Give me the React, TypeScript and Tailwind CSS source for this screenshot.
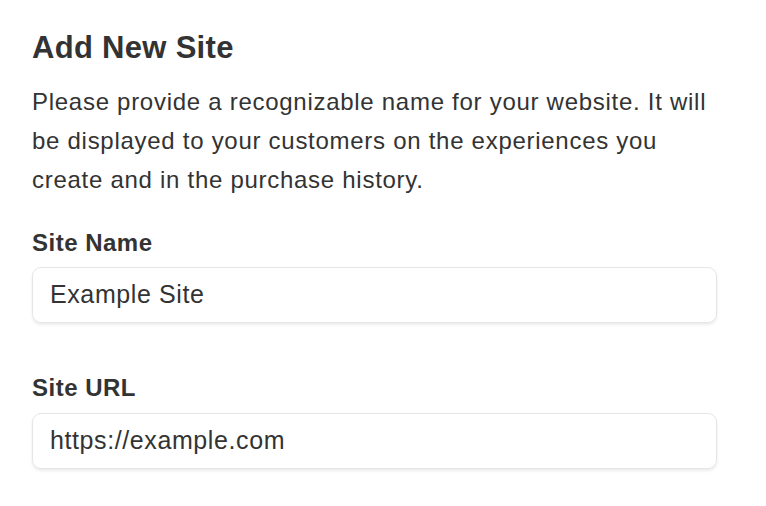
export default function App() {
  return (
    <div
      className="w-[766px] h-[506px] bg-white text-[#333333] px-8 pt-[28px]"
      style={{ fontFamily: '"Liberation Sans", Arial, sans-serif' }}
    >
      <div className="w-[685px]">
        <h1 className="text-[31px] font-bold leading-[40px] tracking-[0.3px]">Add New Site</h1>
        <p className="mt-[14px] text-[24px] leading-[39px] tracking-[0.72px]">
          Please provide a recognizable name for your website. It will be displayed to your customers on the experiences you create and in the purchase history.
        </p>
        <div className="mt-[29px]">
          <label className="block text-[24px] font-bold leading-[30px] tracking-[0.5px]">Site Name</label>
          <div className="mt-[9px] h-[56px] rounded-[9px] border border-[#e6e6e6] shadow-[0_2px_3px_rgba(0,0,0,0.08)] flex items-center px-[17px] text-[25px] tracking-[0.6px]">
            Example Site
          </div>
        </div>
        <div className="mt-[50px]">
          <label className="block text-[24px] font-bold leading-[30px] tracking-[0.5px]">Site URL</label>
          <div className="mt-[10px] h-[56px] rounded-[9px] border border-[#e6e6e6] shadow-[0_2px_3px_rgba(0,0,0,0.08)] flex items-center px-[17px] text-[25px] tracking-[0.6px]">
            https://example.com
          </div>
        </div>
      </div>
    </div>
  );
}
